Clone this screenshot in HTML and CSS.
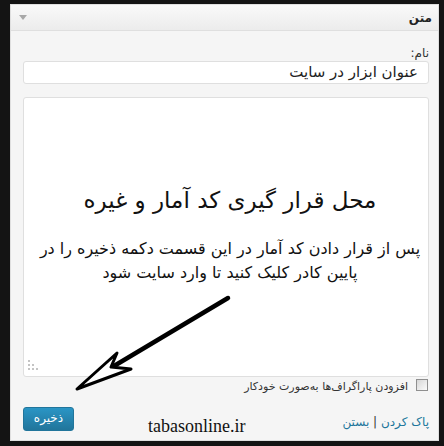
FILE: index.html
```html
<!DOCTYPE html>
<html lang="fa">
<head>
<meta charset="utf-8">
<title>متن</title>
<link rel="stylesheet" href="styles.css">
</head>
<body>
<div class="panel">
  <div class="head">
    <span class="tri"></span>
    <span class="title">متن</span>
  </div>
  <div class="inside">
    <label class="lbl">نام:</label>
    <div class="input">عنوان ابزار در سایت</div>
    <div class="ta">
      <div class="h">محل قرار گیری کد آمار و غیره</div>
      <div class="p">پس از قرار دادن کد آمار در این قسمت دکمه ذخیره را در<br>پایین کادر کلیک کنید تا وارد سایت شود</div>
      <svg class="grip" width="10" height="10" viewBox="0 0 10 10">
        <rect x="0" y="0" width="2" height="2" fill="#c4c4c4"/>
        <rect x="0" y="4" width="2" height="2" fill="#c4c4c4"/>
        <rect x="4" y="4" width="2" height="2" fill="#c4c4c4"/>
        <rect x="0" y="8" width="2" height="2" fill="#c4c4c4"/>
        <rect x="4" y="8" width="2" height="2" fill="#c4c4c4"/>
        <rect x="8" y="8" width="2" height="2" fill="#c4c4c4"/>
      </svg>
    </div>
    <div class="chk">
      <span class="box"></span>
      <span class="chk-label">افزودن پاراگراف‌ها به‌صورت خودکار</span>
    </div>
    <div class="actions">
      <span class="btn">ذخیره</span>
      <span class="wm">tabasonline.ir</span>
      <span class="links"><a class="lnk">پاک کردن</a> <span class="sep">|</span> <a class="lnk">بستن</a></span>
    </div>
  </div>
</div>
<svg class="arrow" width="444" height="446" viewBox="0 0 444 446">
  <path d="M228 298 L114 366" stroke="#000" stroke-width="4.5" stroke-linecap="round" fill="none"/>
  <path d="M77 389 L117 353 L111 367 L131 369 Z" stroke="#000" stroke-width="3" stroke-linejoin="round" fill="#fff"/>
</svg>
</body>
</html>
```

FILE: styles.css
```css
html, body {
  margin: 0;
  padding: 0;
}
body {
  background: #141414;
  width: 444px;
  height: 446px;
  overflow: hidden;
  position: relative;
  font-family: "DejaVu Sans", "Noto Sans", sans-serif;
}
.panel {
  margin: 4px 0 0 10px;
  width: 429px;
  box-sizing: border-box;
  border: 1px solid #dfdfdf;
  background: #f5f5f5;
}
.head {
  height: 25px;
  border-bottom: 1px solid #dfdfdf;
  background: linear-gradient(#f9f9f9, #ececec);
  display: flex;
  align-items: center;
  justify-content: space-between;
  padding: 0 6px 0 8px;
}
.tri {
  width: 0;
  height: 0;
  border-left: 4px solid transparent;
  border-right: 4px solid transparent;
  border-top: 5px solid #a8a8a8;
}
.title {
  direction: rtl;
  font-size: 12px;
  font-weight: bold;
  color: #222;
}
.inside {
  direction: rtl;
  padding: 15px 9px 9px 12px;
}
.lbl {
  display: block;
  font-size: 12px;
  line-height: 15px;
  color: #333;
}
.input {
  height: 23px;
  box-sizing: border-box;
  border: 1px solid #dfdfdf;
  border-radius: 3px;
  background: #fff;
  font-size: 15px;
  line-height: 21px;
  padding: 0 10px;
  color: #222;
}
.ta {
  margin-top: 13px;
  height: 280px;
  box-sizing: border-box;
  border: 1px solid #dfdfdf;
  border-radius: 3px;
  background: #fff;
  display: flex;
  flex-direction: column;
  align-items: center;
  text-align: center;
  color: #111;
  padding-left: 8px;
}
.h {
  margin-top: 86px;
  font-size: 23px;
  line-height: 32px;
  white-space: nowrap;
}
.p {
  margin-top: 21px;
  font-size: 16px;
  line-height: 24px;
  white-space: nowrap;
}
.grip {
  margin-top: auto;
  align-self: flex-end;
  margin-bottom: 6px;
  margin-left: -4px;
}
.chk {
  margin-top: 2px;
  height: 12px;
  display: flex;
  align-items: center;
  gap: 8px;
  padding-right: 1px;
  font-size: 11px;
  color: #333;
}
.box {
  width: 12px;
  height: 12px;
  box-sizing: border-box;
  border: 1px solid #8f8f8f;
  background: linear-gradient(135deg, #d6d6d6, #fbfbfb);
  flex: none;
}
.chk-label {
  line-height: 16px;
  margin-top: 4px;
}
.actions {
  direction: ltr;
  margin-top: 16px;
  height: 24px;
  display: flex;
  align-items: flex-start;
}
.btn {
  width: 51px;
  height: 24px;
  box-sizing: border-box;
  border: 1px solid #21759b;
  border-radius: 3px;
  background: linear-gradient(#2a95c5, #21759b);
  color: #fff;
  font-size: 12px;
  line-height: 21px;
  text-align: center;
  direction: rtl;
}
.wm {
  margin-left: 74px;
  margin-top: 9px;
  font-family: "Liberation Serif", serif;
  font-size: 18px;
  line-height: 20px;
  color: #111;
}
.links {
  margin-left: auto;
  margin-top: 6px;
  direction: rtl;
  font-size: 12px;
  line-height: 18px;
  color: #333;
}
.lnk {
  color: #21759b;
}
.sep {
  color: #333;
}
.arrow {
  position: absolute;
  top: 0;
  left: 0;
  pointer-events: none;
}
```
